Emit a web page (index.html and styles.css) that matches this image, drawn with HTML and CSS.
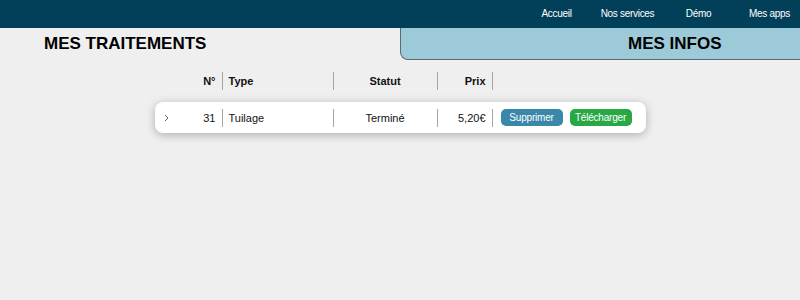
FILE: index.html
```html
<!DOCTYPE html>
<html lang="fr">
<head>
<meta charset="utf-8">
<title>Mes traitements</title>
<link rel="stylesheet" href="styles.css">
</head>
<body>
<header class="topbar">
  <nav class="menu">
    <a class="menu-link" href="#">Accueil</a>
    <a class="menu-link" href="#">Nos services</a>
    <a class="menu-link" href="#">Démo</a>
    <a class="menu-link" href="#">Mes apps</a>
  </nav>
</header>
<div class="tabs">
  <div class="tab tab-active">MES TRAITEMENTS</div>
  <div class="tab tab-other">MES INFOS</div>
</div>
<main class="table">
  <div class="grid head">
    <div class="cell c-chev"></div>
    <div class="cell c-num">N°</div>
    <div class="cell c-type sep">Type</div>
    <div class="cell c-stat sep">Statut</div>
    <div class="cell c-prix sep">Prix</div>
    <div class="cell c-act sep"></div>
  </div>
  <div class="grid row">
    <div class="cell c-chev">
      <svg class="chev" width="5" height="8" viewBox="0 0 5 8"><polyline points="1,1 4,4 1,7" fill="none" stroke="#666" stroke-width="1"/></svg>
    </div>
    <div class="cell c-num">31</div>
    <div class="cell c-type sep">Tuilage</div>
    <div class="cell c-stat sep">Terminé</div>
    <div class="cell c-prix sep">5,20€</div>
    <div class="cell c-act sep">
      <button class="btn btn-del">Supprimer</button>
      <button class="btn btn-dl">Télécharger</button>
    </div>
  </div>
</main>
</body>
</html>
```
FILE: styles.css
```css
html, body {
  margin: 0;
  padding: 0;
}
body {
  background: #efefef;
  font-family: "Liberation Sans", Arial, sans-serif;
  color: #111;
  overflow: hidden;
  width: 800px;
  height: 300px;
}
.topbar {
  height: 28px;
  background: #02405a;
  display: flex;
  justify-content: flex-end;
}
.menu {
  display: flex;
  margin-right: -5px;
}
.menu-link {
  width: 71px;
  text-align: center;
  color: #fff;
  text-decoration: none;
  font-size: 10px;
  letter-spacing: -0.3px;
  line-height: 28px;
}
.tabs {
  display: flex;
  height: 32px;
}
.tab {
  flex: 0 0 50%;
  box-sizing: border-box;
  font-size: 17px;
  font-weight: bold;
  line-height: 32px;
  color: #000;
}
.tab-active {
  padding-left: 44px;
}
.tab-other {
  padding-left: 227px;
  background: #9ccad9;
  border-left: 1px solid #5c6a72;
  border-bottom: 1px solid #5c6a72;
  border-bottom-left-radius: 8px;
  line-height: 31px;
}
.table {
  width: 491px;
  margin: 10px auto 0;
}
.grid {
  display: grid;
  grid-template-columns: 30px 37px 111px 104px 55px 154px;
  align-items: center;
}
.head {
  height: 22px;
  font-size: 11px;
  font-weight: bold;
}
.row {
  margin-top: 10px;
  height: 31px;
  background: #fff;
  border-radius: 8px;
  box-shadow: 0 2px 10px rgba(0, 0, 0, 0.28);
  font-size: 11px;
}
.cell {
  height: 18px;
  line-height: 18px;
  box-sizing: border-box;
  white-space: nowrap;
}
.sep {
  border-left: 1px solid #a5a5a5;
}
.c-chev {
  padding-left: 9px;
  display: flex;
  align-items: center;
}
.c-num {
  text-align: right;
  padding-right: 6px;
}
.c-type {
  padding-left: 6px;
}
.c-stat {
  text-align: center;
}
.c-prix {
  text-align: right;
  padding-right: 6px;
}
.c-act {
  display: flex;
  align-items: center;
  gap: 7px;
  padding-left: 8px;
}
.btn {
  border: none;
  color: #fff;
  font-family: "Liberation Sans", Arial, sans-serif;
  font-size: 10px;
  letter-spacing: -0.2px;
  height: 17px;
  width: 62px;
  border-radius: 5px;
  padding: 0;
}
.btn-del {
  background: #3a87a9;
}
.btn-dl {
  background: #28a745;
}
```
